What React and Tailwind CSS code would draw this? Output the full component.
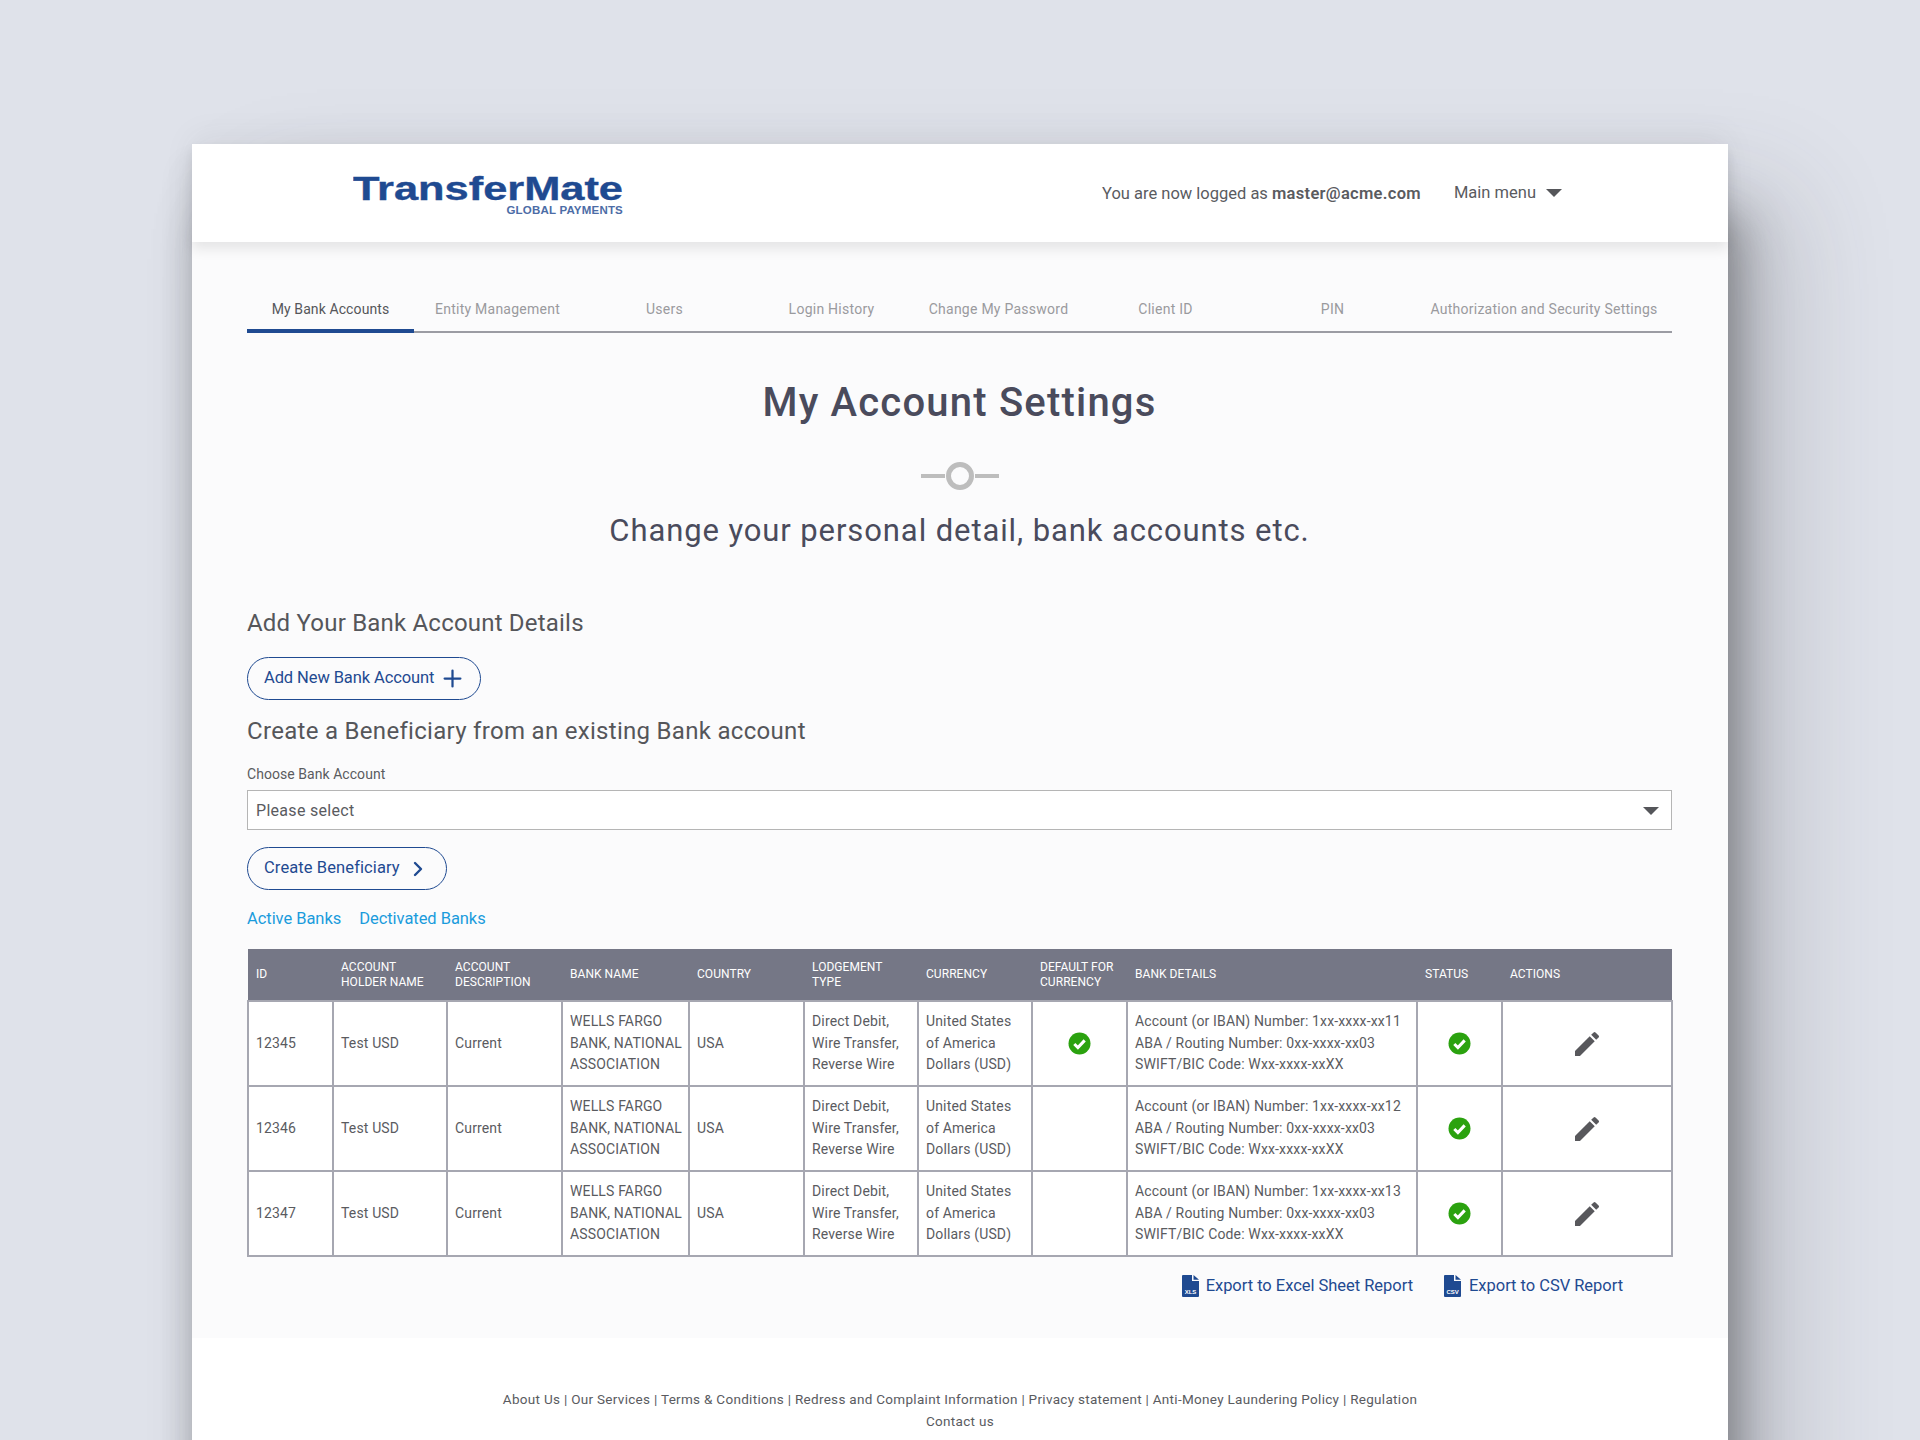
import React from 'react';
import { MdEdit } from 'react-icons/md';
import { FiPlus, FiChevronRight } from 'react-icons/fi';

const tabs = [
  { label: 'My Bank Accounts', width: 'w-[167px]', active: true },
  { label: 'Entity Management', width: 'w-[167px]' },
  { label: 'Users', width: 'w-[167px]' },
  { label: 'Login History', width: 'w-[167px]' },
  { label: 'Change My Password', width: 'w-[167px]' },
  { label: 'Client ID', width: 'w-[167px]' },
  { label: 'PIN', width: 'w-[167px]' },
  { label: 'Authorization and Security Settings', width: 'w-[256px]' },
];

const columns = [
  { label: ['ID'], width: 'w-[85px]' },
  { label: ['ACCOUNT', 'HOLDER NAME'], width: 'w-[114px]' },
  { label: ['ACCOUNT', 'DESCRIPTION'], width: 'w-[115px]' },
  { label: ['BANK NAME'], width: 'w-[127px]' },
  { label: ['COUNTRY'], width: 'w-[115px]' },
  { label: ['LODGEMENT', 'TYPE'], width: 'w-[114px]' },
  { label: ['CURRENCY'], width: 'w-[114px]' },
  { label: ['DEFAULT FOR', 'CURRENCY'], width: 'w-[95px]' },
  { label: ['BANK DETAILS'], width: 'w-[290px]' },
  { label: ['STATUS'], width: 'w-[85px]' },
  { label: ['ACTIONS'], width: 'w-[170px]' },
];

const rows = [
  { id: '12345', number: '1xx-xxxx-xx11', isDefault: true },
  { id: '12346', number: '1xx-xxxx-xx12', isDefault: false },
  { id: '12347', number: '1xx-xxxx-xx13', isDefault: false },
];

const footerLinks = [
  'About Us',
  'Our Services',
  'Terms & Conditions',
  'Redress and Complaint Information',
  'Privacy statement',
  'Anti-Money Laundering Policy',
  'Regulation',
];

const CheckBadge = () => (
  <svg width="23" height="23" viewBox="0 0 23 23" className="mx-auto block">
    <circle cx="11.5" cy="11.5" r="11" fill="#2ba20f" />
    <path d="M6.3 12l3.6 3.6 6.8-7.2" fill="none" stroke="#fff" strokeWidth="3" />
  </svg>
);

const FileIcon = ({ label }) => (
  <svg width="17" height="22" viewBox="0 0 17 22" className="block shrink-0">
    <path d="M0 1a1 1 0 0 1 1-1h9v6h7v15a1 1 0 0 1-1 1H1a1 1 0 0 1-1-1z" fill="#1f4a91" />
    <path d="M11.5 0L17 4.8h-5.5z" fill="#1f4a91" />
    <text x="8.5" y="18.5" textAnchor="middle" fontSize="6" fontWeight="700" fill="#fff" fontFamily="Liberation Sans, sans-serif">
      {label}
    </text>
  </svg>
);

const cellClass = 'border-2 border-[#a6a7b1] px-[7px] align-middle whitespace-nowrap';

const App = () => {
  return (
    <div className="h-[1440px] overflow-hidden bg-[#dfe2ea] pt-[144px] font-['Roboto',sans-serif] text-[#5a5b5f]">
      <div className="mx-auto h-[1400px] w-[1536px] bg-[#fbfbfc] shadow-[14px_70px_44px_rgba(50,50,50,0.4),60px_50px_100px_rgba(60,60,70,0.2),-8px_20px_26px_rgba(60,60,70,0.08),0_-8px_30px_rgba(60,60,70,0.06)]">
        {/* Header */}
        <header className="relative flex h-[98px] items-center justify-between bg-white pl-[161px] pr-[166px] shadow-[0_7px_12px_rgba(0,0,0,0.09)]">
          <svg width="272" height="52" viewBox="0 0 272 52" className="block">
            <text x="0" y="33" textLength="270" lengthAdjust="spacingAndGlyphs" fontSize="34" fontWeight="700" fill="#1f4a91" stroke="#1f4a91" strokeWidth="0.4" fontFamily="Liberation Sans, sans-serif">
              TransferMate
            </text>
            <text x="270" y="47" textAnchor="end" fontSize="11.5" fontWeight="700" letterSpacing="0.2" fill="#4c6ca6" fontFamily="Liberation Sans, sans-serif">
              GLOBAL PAYMENTS
            </text>
          </svg>
          <div className="flex items-center text-[16.5px]">
            <span className="mt-[2px]">
              You are now logged as <b className="font-semibold tracking-[0.3px]">master@acme.com</b>
            </span>
            <span className="ml-[33px]">Main menu</span>
            <span className="ml-[10px] h-0 w-0 border-x-[8px] border-t-[8px] border-x-transparent border-t-[#55565a]" />
          </div>
        </header>

        <main className="pl-[55px] pr-[56px] pt-[50px]">
          {/* Tabs */}
          <nav className="flex border-b-2 border-[#9b9ca3]">
            {tabs.map((tab) => (
              <div
                key={tab.label}
                className={`-mb-[2px] h-[41px] pt-[7px] text-center text-[14px] ${tab.width} ${
                  tab.active ? 'border-b-4 border-[#1f4a91] tracking-[0.1px] text-[#55565a]' : 'tracking-[0.25px] text-[#9a9a9e]'
                }`}
              >
                {tab.label}
              </div>
            ))}
          </nav>

          {/* Title */}
          <h1 className="mt-[46px] text-center text-[40px] font-medium leading-[48px] tracking-[1.2px] text-[#4a4b5c]">
            My Account Settings
          </h1>
          <svg width="78" height="30" viewBox="0 0 78 30" className="mx-auto mt-[34px] block">
            <path d="M0 15h24M54 15h24" stroke="#bdbdbd" strokeWidth="4" />
            <circle cx="39" cy="15" r="11.5" fill="none" stroke="#bdbdbd" strokeWidth="5" />
          </svg>
          <h2 className="mt-[20px] text-center text-[31px] leading-[40px] tracking-[0.9px] text-[#4a4b5c]">
            Change your personal detail, bank accounts etc.
          </h2>

          {/* Add bank account */}
          <h3 className="mt-[57px] text-[24px] leading-[30px] tracking-[0.2px] text-[#55565a]">
            Add Your Bank Account Details
          </h3>
          <button className="mt-[19px] flex h-[43px] w-[234px] items-center rounded-full border-[1.5px] border-[#1f4a91] pl-[16px] text-[16.5px] tracking-[-0.1px] text-[#1f4a91]">
            Add New Bank Account
            <FiPlus className="ml-[5px] size-[27px]" strokeWidth={2} />
          </button>

          <h3 className="mt-[16px] text-[24px] leading-[30px] tracking-[0.3px] text-[#55565a]">
            Create a Beneficiary from an existing Bank account
          </h3>
          <label className="mt-[19px] block text-[14px] leading-[18px] tracking-[0.05px]">Choose Bank Account</label>
          <div className="mt-[7px] flex h-[40px] items-center justify-between border-[1.5px] border-[#b5b5b5] bg-white pl-[8px] pr-[12px] pt-[1px] text-[16px] tracking-[0.3px]">
            Please select
            <span className="h-0 w-0 border-x-[8px] border-t-[8px] border-x-transparent border-t-[#55565a]" />
          </div>
          <button className="mt-[17px] flex h-[43px] w-[200px] items-center rounded-full border-[1.5px] border-[#1f4a91] pl-[16px] text-[16.5px] tracking-[0.1px] text-[#1f4a91]">
            Create Beneficiary
            <FiChevronRight className="ml-[6px] size-[24px]" strokeWidth={2.4} />
          </button>

          <div className="mt-[18px] flex gap-[18px] text-[16.5px] leading-[22px] tracking-[-0.05px] text-[#1a9bdc]">
            <a>Active Banks</a>
            <a>Dectivated Banks</a>
          </div>

          {/* Accounts table */}
          <table className="mt-[19px] w-[1424px] table-fixed border-collapse text-[14px] leading-[21.5px] tracking-[0.15px]">
            <thead>
              <tr className="h-[52px] bg-[#757786] text-left text-white">
                {columns.map((col) => (
                  <th key={col.label[0] + col.width} className={`px-[8px] text-[12px] font-normal leading-[15px] tracking-[0.05px] ${col.width}`}>
                    {col.label.map((line) => (
                      <div key={line}>{line}</div>
                    ))}
                  </th>
                ))}
              </tr>
            </thead>
            <tbody className="bg-white">
              {rows.map((row) => (
                <tr key={row.id} className="h-[85px]">
                  <td className={cellClass}>{row.id}</td>
                  <td className={cellClass}>Test USD</td>
                  <td className={cellClass}>Current</td>
                  <td className={cellClass}>
                    WELLS FARGO
                    <br />
                    BANK, NATIONAL
                    <br />
                    ASSOCIATION
                  </td>
                  <td className={cellClass}>USA</td>
                  <td className={cellClass}>
                    Direct Debit,
                    <br />
                    Wire Transfer,
                    <br />
                    Reverse Wire
                  </td>
                  <td className={cellClass}>
                    United States
                    <br />
                    of America
                    <br />
                    Dollars (USD)
                  </td>
                  <td className={cellClass}>{row.isDefault && <CheckBadge />}</td>
                  <td className={cellClass}>
                    Account (or IBAN) Number: {row.number}
                    <br />
                    ABA / Routing Number: 0xx-xxxx-xx03
                    <br />
                    SWIFT/BIC Code: Wxx-xxxx-xxXX
                  </td>
                  <td className={cellClass}>
                    <CheckBadge />
                  </td>
                  <td className={cellClass}>
                    <MdEdit className="mx-auto size-[32px] text-[#58585c]" />
                  </td>
                </tr>
              ))}
            </tbody>
          </table>

          {/* Export links */}
          <div className="mt-[18px] flex justify-end pr-[49px] text-[16.5px] leading-[22px] tracking-[-0.03px] text-[#1f4a91]">
            <a className="flex items-center gap-[7px]">
              <FileIcon label="XLS" />
              Export to Excel Sheet Report
            </a>
            <a className="ml-[31px] flex items-center gap-[8px]">
              <FileIcon label="CSV" />
              Export to CSV Report
            </a>
          </div>
        </main>

        {/* Footer */}
        <footer className="mt-[41px] h-[200px] bg-white pt-[51px] text-center text-[13.5px] leading-[21.5px] tracking-[0.3px]">
          <div>{footerLinks.join(' | ')}</div>
          <div>Contact us</div>
        </footer>
      </div>
    </div>
  );
};

export default App;
